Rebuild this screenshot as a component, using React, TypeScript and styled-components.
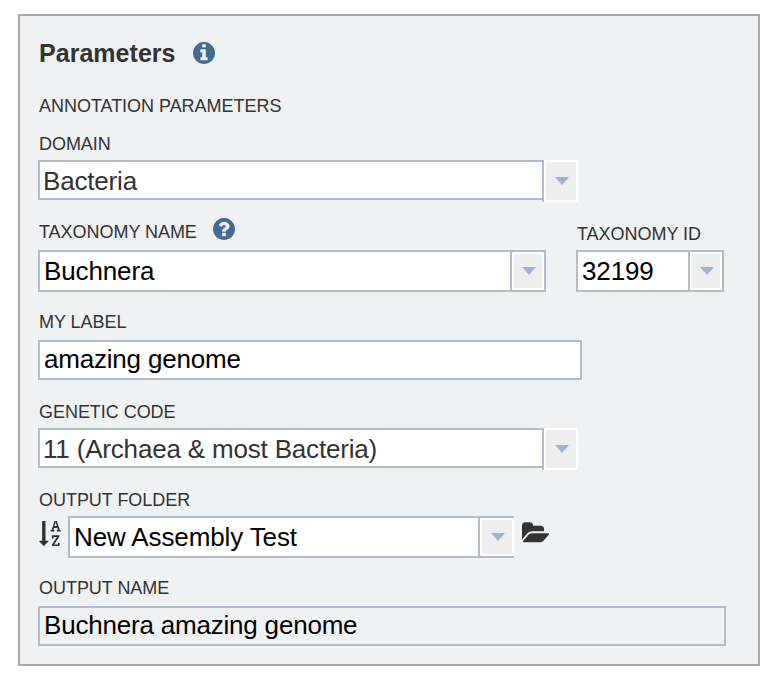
import React from "react";
import styled, { createGlobalStyle } from "styled-components";

const GlobalStyle = createGlobalStyle`
  *, *::before, *::after { box-sizing: border-box; }
  body {
    margin: 0;
    background: #fff;
    color: #333;
    font-family: "Liberation Sans", Arial, Helvetica, sans-serif;
  }
`;

const LINE = "#b5bcc9";

const Panel = styled.main`
  width: 742px;
  height: 652px;
  margin: 14px 0 0 18px;
  padding-left: 18px;
  border: 2px solid #aaa;
  background: #eff1f3;
  display: flex;
  flex-direction: column;
`;

const Header = styled.header`
  display: flex;
  align-items: center;
  gap: 17px;
  height: 74px;
  padding-left: 1px;
`;

const Title = styled.h1`
  margin: 0;
  font-size: 25px;
  line-height: 30px;
  font-weight: 700;
  letter-spacing: 0.03px;
`;

const SectionName = styled.h2`
  margin: 0;
  padding: 6px 0 0 1px;
  height: 36px;
  font-size: 18px;
  line-height: 20px;
  font-weight: 400;
  letter-spacing: -0.03px;
  text-transform: uppercase;
`;

const Fields = styled.form`
  display: flex;
  flex-direction: column;
`;

const Row = styled.div`
  display: flex;
  gap: 30px;
`;

const Field = styled.div<{ $height: number }>`
  display: flex;
  flex-direction: column;
  justify-content: flex-end;
  height: ${(p) => p.$height}px;
`;

const Label = styled.label<{ $gap: number }>`
  display: flex;
  gap: 16px;
  height: 20px;
  margin: 0 0 ${(p) => p.$gap}px 1px;
  font-size: 18px;
  line-height: 20px;
  letter-spacing: -0.04px;
  text-transform: uppercase;
  white-space: nowrap;
`;

const Glyph = styled.svg<{ $w: number; $h: number; $color?: string }>`
  display: block;
  flex: none;
  width: ${(p) => p.$w}px;
  height: ${(p) => p.$h}px;
  fill: ${(p) => p.$color ?? "#333"};
`;

const HelpSlot = styled.span`
  display: block;
  height: 20px;
  margin-top: -4px;
`;

const TextBox = styled.div<{ $width: number; $readOnly?: boolean }>`
  width: ${(p) => p.$width}px;
  height: 40px;
  padding-left: 4px;
  border: 2px solid ${LINE};
  background: ${(p) => (p.$readOnly ? "transparent" : "#fff")};
  color: #000;
  font-size: 26px;
  line-height: 35px;
  letter-spacing: -0.2px;
  white-space: nowrap;
`;

const SelectBox = styled.div`
  display: flex;
  height: 42px;
`;

const SelectValue = styled.div`
  width: 504px;
  height: 40px;
  padding-left: 3px;
  border: 2px solid ${LINE};
  border-right: 0;
  background: #fff;
  font-size: 26px;
  line-height: 38px;
  letter-spacing: -0.18px;
  white-space: nowrap;
`;

const SelectButton = styled.div`
  display: flex;
  align-items: center;
  justify-content: center;
  width: 36px;
  height: 42px;
  padding-left: 2px;
  border-left: 2px solid ${LINE};
  background: #eee;
  box-shadow: inset 0 0 0 2px #fff;
`;

const ComboBox = styled.div<{ $width: number; $open?: boolean }>`
  display: flex;
  width: ${(p) => p.$width}px;
  height: 42px;
  border: 2px solid ${LINE};
  border-right-width: ${(p) => (p.$open ? 0 : 2)}px;
  background: #fff;
`;

const ComboValue = styled.div`
  flex: 1;
  padding-left: 4px;
  color: #000;
  font-size: 26px;
  line-height: 38px;
  letter-spacing: -0.12px;
  white-space: nowrap;
`;

const ComboButton = styled.div<{ $width: number }>`
  display: flex;
  align-items: center;
  justify-content: center;
  width: ${(p) => p.$width}px;
  padding-left: 2px;
  border-left: 2px solid ${LINE};
  background: #eee;
  box-shadow: inset 0 0 0 2px #fff;
`;

const FolderRow = styled.div`
  display: flex;
`;

const SortSlot = styled.div`
  width: 30px;
  padding: 5px 0 0 1px;
`;

const BrowseSlot = styled.div`
  padding: 6px 0 0 8px;
`;

const DISC =
  "M1664 896q0 209-103 385.5t-279.5 279.5-385.5 103-385.5-103-279.5-279.5-103-385.5 103-385.5 279.5-279.5 385.5-103 385.5 103 279.5 279.5 103 385.5z";

const InfoIcon = () => (
  <Glyph $w={22} $h={22} $color="#436a8f" viewBox="128 128 1536 1536">
    <path
      d={
        "M1152 1376v-160q0-14-9-23t-23-9h-96v-512q0-14-9-23t-23-9h-320q-14 0-23 9t-9 23v160q0 14 9 23t23 9h96v320h-96q-14 0-23 9t-9 23v160q0 14 9 23t23 9h448q14 0 23-9t9-23zM1024 480v-160q0-14-9-23t-23-9h-192q-14 0-23 9t-9 23v160q0 14 9 23t23 9h192q14 0 23-9t9-23z" +
        DISC
      }
    />
  </Glyph>
);

const HelpIcon = () => (
  <Glyph $w={22} $h={22} $color="#436a8f" viewBox="128 128 1536 1536">
    <path
      d={
        "M1024 1376v-192q0-14-9-23t-23-9h-192q-14 0-23 9t-9 23v192q0 14 9 23t23 9h192q14 0 23-9t9-23zM1280 704q0-88-55.5-163t-138.5-116-170-41q-243 0-371 213-15 24 8 42l132 100q7 6 19 6 16 0 25-12 53-68 86-92 34-24 86-24 48 0 85.5 26t37.5 59q0 38-20 61t-68 45q-63 28-115.5 86.5t-52.5 125.5v36q0 14 9 23t23 9h192q14 0 23-9t9-23q0-19 21.5-49.5t54.5-49.5q32-18 49-28.5t46-35 44.5-48 28-60.5 12.5-81z" +
        DISC
      }
    />
  </Glyph>
);

const SortIcon = () => (
  <Glyph $w={22} $h={25} viewBox="20 0 1661 1792" preserveAspectRatio="none">
    <path d="M1191 360h177l-72-218-12-47q-2-16-2-20h-4l-3 20q0 1-3.5 18t-7.5 29zM736 1440q0 12-10 24l-319 319q-10 9-23 9-12 0-23-9l-320-320q-15-16-7-35 8-20 30-20h192v-1376q0-14 9-23t23-9h192q14 0 23 9t9 23v1376h192q14 0 23 9t9 23zM1572 1559v233h-584v-90l369-529q12-18 21-27l11-9v-3q-2 0-6.5.5t-7.5.5q-12 3-30 3h-232v115h-120v-229h567v89l-369 530q-6 8-21 26l-11 10v3l14-3q9-1 30-1h248v-119h121zM1661 650v106h-288v-106h75l-47-144h-243l-47 144h75v106h-287v-106h70l230-650h162l230 650h70z" />
  </Glyph>
);

const FolderIcon = () => (
  <Glyph $w={27} $h={20.5} viewBox="0 128 1879 1408">
    <path d="M1879 952q0 31-31 66l-336 396q-43 51-120.5 86.5t-143.5 35.5h-1088q-34 0-60.5-13t-26.5-43q0-31 31-66l336-396q43-51 120.5-86.5t143.5-35.5h1088q34 0 60.5 13t26.5 43zM1536 608v160h-832q-94 0-197 47.5t-164 119.5l-337 396-5 6q0-4-.5-12.5t-.5-12.5v-960q0-92 66-158t158-66h320q92 0 158 66t66 158v32h544q92 0 158 66t66 158z" />
  </Glyph>
);

const Arrow = () => (
  <Glyph $w={14} $h={8} $color="#a0b2d4" viewBox="0 0 14 8">
    <path d="M0 0h14L7 8z" />
  </Glyph>
);

const Select = ({ value }: { value: string }) => (
  <SelectBox>
    <SelectValue>{value}</SelectValue>
    <SelectButton>
      <Arrow />
    </SelectButton>
  </SelectBox>
);

const Combo = ({ value, width, button, open }: { value: string; width: number; button: number; open?: boolean }) => (
  <ComboBox $width={width} $open={open}>
    <ComboValue>{value}</ComboValue>
    <ComboButton $width={button}>
      <Arrow />
    </ComboButton>
  </ComboBox>
);

export default function App() {
  return (
    <>
      <GlobalStyle />
      <Panel>
        <Header>
          <Title>Parameters</Title>
          <InfoIcon />
        </Header>
        <SectionName>Annotation Parameters</SectionName>
        <Fields>
          <Field $height={76}>
            <Label $gap={6}>Domain</Label>
            <Select value="Bacteria" />
          </Field>
          <Row>
            <Field $height={90}>
              <Label $gap={8}>
                Taxonomy Name
                <HelpSlot>
                  <HelpIcon />
                </HelpSlot>
              </Label>
              <Combo value="Buchnera" width={508} button={34} />
            </Field>
            <Field $height={90}>
              <Label $gap={6}>Taxonomy ID</Label>
              <Combo value="32199" width={148} button={34} />
            </Field>
          </Row>
          <Field $height={88}>
            <Label $gap={8}>My Label</Label>
            <TextBox $width={544}>amazing genome</TextBox>
          </Field>
          <Field $height={90}>
            <Label $gap={6}>Genetic Code</Label>
            <Select value="11 (Archaea &amp; most Bacteria)" />
          </Field>
          <Field $height={88}>
            <Label $gap={6}>Output Folder</Label>
            <FolderRow>
              <SortSlot>
                <SortIcon />
              </SortSlot>
              <Combo value="New Assembly Test" width={446} button={36} open />
              <BrowseSlot>
                <FolderIcon />
              </BrowseSlot>
            </FolderRow>
          </Field>
          <Field $height={88}>
            <Label $gap={8}>Output Name</Label>
            <TextBox $width={688} $readOnly>
              Buchnera amazing genome
            </TextBox>
          </Field>
        </Fields>
      </Panel>
    </>
  );
}
